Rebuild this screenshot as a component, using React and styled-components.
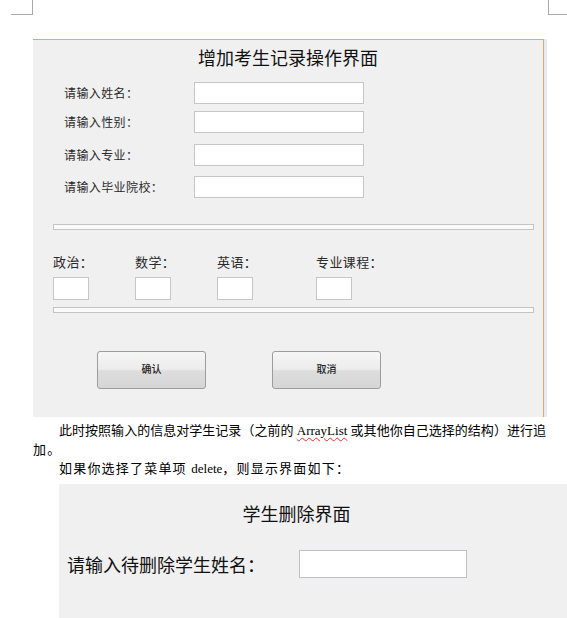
import React from "react";
import styled, { createGlobalStyle } from "styled-components";

const GlobalStyle = createGlobalStyle`
  html, body {
    margin: 0;
    padding: 0;
    background: #ffffff;
  }
  body {
    width: 567px;
    height: 618px;
    overflow: hidden;
    font-family: "Liberation Serif", "Noto Sans CJK SC", serif;
  }
  * {
    box-sizing: border-box;
  }
`;

const Page = styled.div`
  width: 567px;
  display: flex;
  flex-direction: column;
`;

const MarkRow = styled.div`
  height: 15px;
  display: flex;
  justify-content: space-between;
`;

const CornerMark = styled.div`
  height: 15px;
  width: ${(p) => p.$w}px;
  margin-left: ${(p) => p.$left || 0}px;
  border-bottom: 1px solid #a8a8a8;
  border-right: ${(p) => (p.$side === "left" ? "1px solid #a8a8a8" : "none")};
  border-left: ${(p) => (p.$side === "right" ? "1px solid #a8a8a8" : "none")};
`;

const AddWindow = styled.div`
  margin-top: 24px;
  margin-left: 33px;
  width: 511px;
  background: #f0f0f0;
  border-top: 1px solid #eaaa55;
  border-right: 1px solid #f0a850;
  box-shadow: 3px 0 0 #e8eaf6;
  display: flex;
  flex-direction: column;
  padding: 5px 0 28px;
  font-family: "Noto Sans CJK SC", sans-serif;
`;

const WindowTitle = styled.div`
  font-size: 18px;
  line-height: 24px;
  color: #111;
  text-align: center;
`;

const FormRow = styled.div`
  display: grid;
  grid-template-columns: 130px 170px;
  align-items: center;
  padding-left: 31px;
  margin-top: ${(p) => p.$gap}px;
`;

const Label = styled.span`
  font-size: ${(p) => p.$size || 12}px;
  line-height: 16px;
  color: #2a2a2a;
  letter-spacing: 0.4px;
  white-space: nowrap;
`;

const TextBox = styled.div`
  height: ${(p) => p.$h || 22}px;
  width: ${(p) => p.$w || 170}px;
  background: #ffffff;
  border: 1px solid #c6c6c6;
`;

const Separator = styled.div`
  margin: ${(p) => p.$top}px 0 0 20px;
  width: 481px;
  height: 6px;
  background: #fafafa;
  border: 1px solid #c4c4c4;
`;

const ScoreGrid = styled.div`
  display: grid;
  grid-template-columns: 82px 82px 99px 82px;
  margin: 24px 0 0 20px;
`;

const ScoreCell = styled.div`
  display: flex;
  flex-direction: column;
  gap: 7px;
`;

const ButtonRow = styled.div`
  display: flex;
  gap: 66px;
  margin: 38px 0 0 64px;
`;

const Button = styled.div`
  width: 109px;
  height: 38px;
  border: 1px solid #9c9c9c;
  border-radius: 3px;
  background: linear-gradient(#f6f6f6 0%, #ececec 48%, #dddddd 52%, #d6d6d6 100%);
  display: flex;
  align-items: center;
  justify-content: center;
  padding-bottom: 3px;
  font-size: 10px;
  color: #222;
  font-weight: 500;
`;

const Paragraph = styled.div`
  margin-left: 33px;
  width: 513px;
  font-size: 13px;
  line-height: 19px;
  color: #000;
`;

const Line = styled.div`
  margin-top: ${(p) => p.$top || 0}px;
  text-indent: ${(p) => (p.$indent ? 26 : 0)}px;
  text-align: ${(p) => (p.$justify ? "justify" : "left")};
  text-align-last: ${(p) => (p.$justify ? "justify" : "auto")};
  letter-spacing: ${(p) => (p.$justify ? 0 : 1.2)}px;
  white-space: nowrap;
`;

const Misspelled = styled.span`
  text-decoration: underline wavy #e03030;
  text-decoration-thickness: 1px;
  text-underline-offset: 2px;
  letter-spacing: 0;
`;

const Latin = styled.span`
  letter-spacing: 0;
`;

const DeleteWindow = styled.div`
  margin: 6px 0 0 59px;
  width: 508px;
  height: 140px;
  background: #f0f0f0;
  padding-top: 17px;
  font-family: "Noto Sans CJK SC", sans-serif;
`;

const DeleteTitle = styled.div`
  width: 475px;
  font-size: 18px;
  line-height: 24px;
  color: #111;
  text-align: center;
`;

const DeleteRow = styled.div`
  display: grid;
  grid-template-columns: 232px 168px;
  align-items: center;
  margin: 25px 0 0 8px;
`;

const BigLabel = styled.span`
  font-size: 18px;
  line-height: 24px;
  color: #111;
  white-space: nowrap;
`;

const BigBox = styled.div`
  height: 28px;
  background: #ffffff;
  border: 1px solid #c0c0c8;
`;

const fields = [
  { label: "请输入姓名：", gap: 13 },
  { label: "请输入性别：", gap: 7 },
  { label: "请输入专业：", gap: 11 },
  { label: "请输入毕业院校：", gap: 10 },
];

const scores = ["政治：", "数学：", "英语：", "专业课程："];

export default function App() {
  return (
    <Page>
      <GlobalStyle />
      <MarkRow>
        <CornerMark $side="left" $w={22} $left={11} />
        <CornerMark $side="right" $w={19} />
      </MarkRow>

      <AddWindow>
        <WindowTitle>增加考生记录操作界面</WindowTitle>
        {fields.map((f) => (
          <FormRow key={f.label} $gap={f.gap}>
            <Label>{f.label}</Label>
            <TextBox />
          </FormRow>
        ))}
        <Separator $top={26} />
        <ScoreGrid>
          {scores.map((s) => (
            <ScoreCell key={s}>
              <Label $size={13}>{s}</Label>
              <TextBox $w={36} $h={23} />
            </ScoreCell>
          ))}
        </ScoreGrid>
        <Separator $top={7} />
        <ButtonRow>
          <Button>确认</Button>
          <Button>取消</Button>
        </ButtonRow>
      </AddWindow>

      <Paragraph>
        <Line $indent $justify $top={4}>
          此时按照输入的信息对学生记录（之前的 <Misspelled>ArrayList</Misspelled> 或其他你自己选择的结构）进行追
        </Line>
        <Line>加。</Line>
        <Line $indent>
          如果你选择了菜单项 <Latin>delete</Latin>，则显示界面如下：
        </Line>
      </Paragraph>

      <DeleteWindow>
        <DeleteTitle>学生删除界面</DeleteTitle>
        <DeleteRow>
          <BigLabel>请输入待删除学生姓名：</BigLabel>
          <BigBox />
        </DeleteRow>
      </DeleteWindow>
    </Page>
  );
}
